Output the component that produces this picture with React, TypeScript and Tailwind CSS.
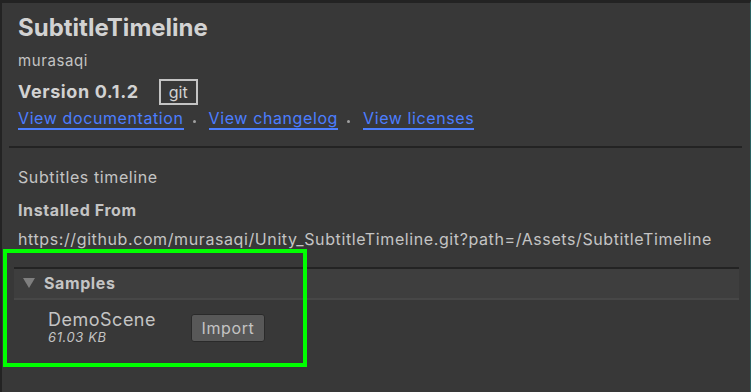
import React from "react";

const font = { fontFamily: "Inter, 'Noto Sans', sans-serif" };

function Dot() {
  return <span className="ml-[9px] mr-[13px] inline-block h-[3px] w-[3px] translate-y-[2px] rounded-full bg-[#a0a0a0]" />;
}

function Link({ children }: { children: React.ReactNode }) {
  return (
    <span className="border-b-2 border-[#4c7eff] leading-[19px] text-[#4c7eff]">{children}</span>
  );
}

export default function App() {
  return (
    <div
      className="relative h-[392px] w-[751px] overflow-hidden border-l-2 border-t-[3px] border-r border-[#232323] border-r-[#2a6262] bg-[#383838] text-[16px] tracking-[0.6px] text-[#c4c4c4]"
      style={font}
    >
      {/* header */}
      <div className="flex flex-col pl-4 pt-[10px]">
        <div className="text-[24px] font-bold leading-[30px] tracking-normal text-[#d2d2d2]">SubtitleTimeline</div>
        <div className="mt-[8px] text-[15px] leading-[20px]">murasaqi</div>
        <div className="mt-[8px] flex items-center">
          <span className="text-[18px] font-bold leading-[22px] text-[#d2d2d2]">Version 0.1.2</span>
          <span className="ml-[20px] border-2 border-[#c4c4c4] px-[8px] leading-[22px] tracking-normal text-[#d2d2d2]">git</span>
        </div>
        <div className="mt-[4px] flex items-center">
          <Link>View documentation</Link>
          <Dot />
          <Link>View changelog</Link>
          <Dot />
          <Link>View licenses</Link>
        </div>
      </div>

      <div className="ml-[7px] mr-[8px] mt-[16px] h-[2px] bg-[#232323]" />

      {/* details */}
      <div className="flex flex-col pl-4 pt-[19px]">
        <div className="leading-[20px]">Subtitles timeline</div>
        <div className="mt-[13px] font-bold leading-[20px]">Installed From</div>
        <div className="mt-[9px] leading-[20px]">
          https://github.com/murasaqi/Unity_SubtitleTimeline.git?path=/Assets/SubtitleTimeline
        </div>
      </div>

      {/* samples */}
      <div className="ml-[12px] mr-[11px] mt-[18px] flex flex-col">
        <div className="flex h-[33px] items-center border-b-2 border-t-2 border-b-[#474747] border-t-[#232323] bg-[#3e3e3e] pb-[2px] pl-[9px]">
          <svg width="12" height="10" viewBox="0 0 12 10" className="mr-[9px]">
            <polygon points="0,0 12,0 6,10" fill="#7f7f7f" />
          </svg>
          <span className="font-bold">Samples</span>
        </div>
        <div className="flex items-center pl-[34px] pt-[10px]">
          <div className="flex w-[143px] flex-col">
            <span className="text-[18px] leading-[20px] tracking-[0.5px]">DemoScene</span>
            <span className="text-[13px] italic leading-[15px]">61.03 KB</span>
          </div>
          <button className="flex h-[28px] w-[74px] items-center justify-center rounded-[3px] border border-[#2a2a2a] bg-[#585858] text-[16px] tracking-[0.6px] text-[#c4c4c4]">
            Import
          </button>
        </div>
      </div>

      {/* highlight annotation */}
      <div className="absolute left-[1px] top-[246px] h-[118px] w-[304px] border-[4px] border-[#00ff00]" />
    </div>
  );
}
